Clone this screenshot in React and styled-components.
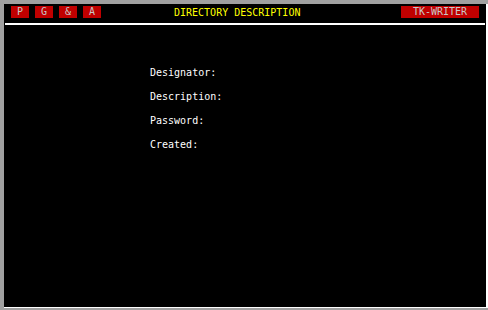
import React from 'react'
import styled, { createGlobalStyle } from 'styled-components'

const Global = createGlobalStyle`
  html, body { margin: 0; padding: 0; background: #a0a0a0; }
  body { font-family: "DejaVu Sans Mono", "Liberation Mono", monospace; }
`

const Frame = styled.div`
  width: 488px;
  height: 310px;
  box-sizing: border-box;
  padding: 4px 0 2px 4px;
  background: #a0a0a0;
`

const Screen = styled.div`
  height: 100%;
  box-sizing: border-box;
  background: #000;
  border-right: 2px solid #fff;
  border-bottom: 1px solid #fff;
  display: flex;
  flex-direction: column;
`

const TopBar = styled.div`
  height: 19px;
  box-sizing: border-box;
  padding: 2px 7px 0 7px;
  display: flex;
  align-items: flex-start;
`

const Keys = styled.div`
  display: flex;
  gap: 6px;
`

const Key = styled.div`
  width: ${p => p.$w || 18}px;
  height: 12px;
  background: #c00000;
  color: #c8c8c8;
  font-size: 10px;
  line-height: 12px;
  text-align: center;
`

const Title = styled.div`
  margin-left: 73px;
  flex: 1;
  color: #ffff00;
  font-size: 10px;
  line-height: 12px;
  padding-top: 1px;
`

const Rule = styled.div`
  height: 2px;
  margin: 0 1px;
  background: #fff;
`

const Form = styled.div`
  margin-top: 42px;
  padding-left: 146px;
  display: flex;
  flex-direction: column;
  gap: 12px;
`

const Label = styled.div`
  color: #fff;
  font-size: 10px;
  line-height: 12px;
`

export default function App() {
  return (
    <Frame>
      <Global />
      <Screen>
        <TopBar>
          <Keys>
            <Key>P</Key>
            <Key>G</Key>
            <Key>&amp;</Key>
            <Key>A</Key>
          </Keys>
          <Title>DIRECTORY DESCRIPTION</Title>
          <Key $w={78}>TK-WRITER</Key>
        </TopBar>
        <Rule />
        <Form>
          <Label>Designator:</Label>
          <Label>Description:</Label>
          <Label>Password:</Label>
          <Label>Created:</Label>
        </Form>
      </Screen>
    </Frame>
  )
}
